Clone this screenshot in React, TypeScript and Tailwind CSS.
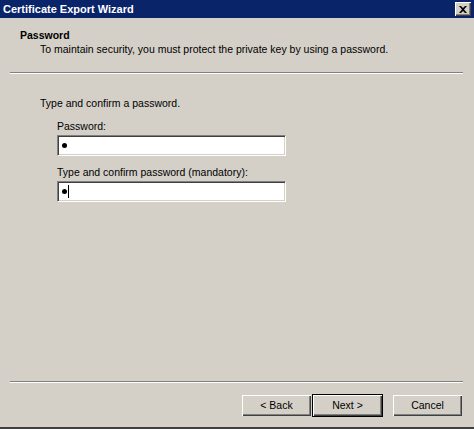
import React from "react";

function Field({ cursor }: { cursor?: boolean }) {
  return (
    <div className="w-[229px] h-[21px] bg-white border border-t-[#808080] border-l-[#808080] border-b-white border-r-white shadow-[inset_1px_1px_0_#404040,inset_-1px_-1px_0_#d4d0c8] flex items-center pl-[4px]">
      <span className="w-[5px] h-[5px] rounded-full bg-black" />
      {cursor && <span className="w-px h-[13px] bg-black ml-px" />}
    </div>
  );
}

function Btn({ label, def }: { label: string; def?: boolean }) {
  return (
    <div className={def ? "border border-black" : "border border-transparent"}>
      <div className="w-[69px] h-[21px] flex items-center justify-center bg-[#d4d0c8] shadow-[inset_1px_1px_0_#ffffff,inset_-1px_-1px_0_#404040,inset_-2px_-2px_0_#808080]">
        {label}
      </div>
    </div>
  );
}

export default function App() {
  return (
    <div
      className="w-[474px] h-[429px] bg-[#d4d0c8] flex flex-col text-[10.5px] text-black overflow-hidden"
      style={{ fontFamily: '"Liberation Sans", Arial, sans-serif' }}
    >
      <div className="h-[18px] bg-[#0a246a] flex items-center justify-between pl-[3px] pr-[3px] shrink-0">
        <span className="text-white font-bold text-[11px]">Certificate Export Wizard</span>
        <div className="w-[16px] h-[14px] bg-[#d4d0c8] shadow-[inset_1px_1px_0_#ffffff,inset_-1px_-1px_0_#404040,inset_-2px_-2px_0_#808080] flex items-center justify-center">
          <svg width="8" height="7" viewBox="0 0 8 7">
            <path d="M0 0h2l2 2 2-2h2L5 3.5 8 7H6L4 5 2 7H0l3-3.5z" fill="#000" />
          </svg>
        </div>
      </div>
      <div className="pl-[20px] pt-[11px] h-[54px] shrink-0">
        <div className="font-bold leading-[13px]">Password</div>
        <div className="pl-[20px] mt-[1px] leading-[13px]">
          To maintain security, you must protect the private key by using a password.
        </div>
      </div>
      <div className="mx-[10px] w-[453px] h-[2px] border-t border-t-[#808080] border-b border-b-white shrink-0" />
      <div className="pl-[40px] pt-[23px] flex-1 flex flex-col">
        <div className="leading-[13px]">Type and confirm a password.</div>
        <div className="pl-[17px] flex flex-col">
          <div className="leading-[13px] mt-[10px] mb-[2px]">Password:</div>
          <Field />
          <div className="leading-[13px] mt-[10px] mb-[2px]">Type and confirm password (mandatory):</div>
          <Field cursor />
        </div>
      </div>
      <div className="mx-[10px] w-[453px] h-[2px] border-t border-t-[#808080] border-b border-b-white shrink-0" />
      <div className="flex justify-end pr-[11px] pt-[11px] pb-[10px] shrink-0">
        <Btn label="< Back" />
        <Btn label="Next >" def />
        <div className="w-[9px]" />
        <Btn label="Cancel" />
      </div>
      <div className="h-[2px] bg-[#404040] shrink-0" />
    </div>
  );
}
